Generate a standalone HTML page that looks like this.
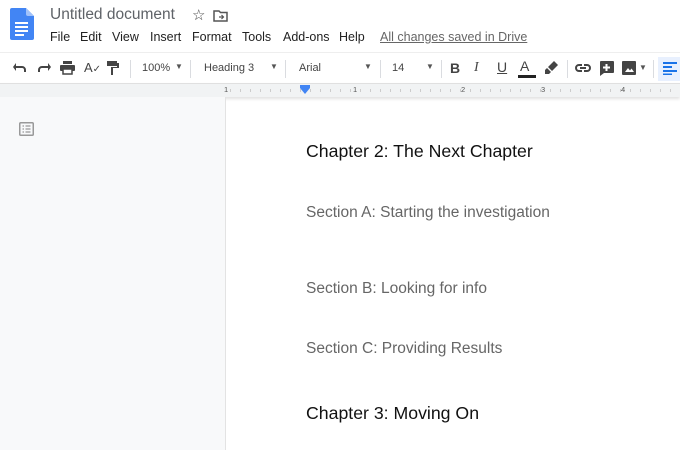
<!DOCTYPE html><html><head><style>
*{margin:0;padding:0;box-sizing:border-box}
body{width:680px;height:450px;overflow:hidden;background:#fff;font-family:"Liberation Sans",Arial,sans-serif;position:relative}
.a{position:absolute;white-space:nowrap}
.tb{color:#444;font-size:11px}
.ic{position:absolute;fill:#444}
.sep{position:absolute;top:60px;width:1px;height:18px;background:#dadce0}
</style></head><body>
<svg class="a" style="left:10px;top:8px" width="24" height="32" viewBox="0 0 24 32"><path d="M2 0h14l8 8v22a2 2 0 0 1-2 2H2a2 2 0 0 1-2-2V2a2 2 0 0 1 2-2z" fill="#4285f4"/><path d="M16 0l8 8h-6a2 2 0 0 1-2-2z" fill="#a1c2fa"/><rect x="5" y="14" width="13" height="2" fill="#fff"/><rect x="5" y="18" width="13" height="2" fill="#fff"/><rect x="5" y="22" width="13" height="2" fill="#fff"/><rect x="5" y="26" width="9" height="2" fill="#fff"/></svg>
<div class="a" style="left:50px;top:6px;font-size:15.5px;color:#5f6368">Untitled document</div>
<div class="a" style="left:192px;top:6px;font-size:15px;color:#444">☆</div>
<svg class="a" style="left:213px;top:10px" width="15" height="12" viewBox="0 0 15 12"><path d="M1 1h5l1.5 1.5H14V11H1z" fill="none" stroke="#555" stroke-width="1.5"/><path d="M6 7h4M8.5 5l2 2-2 2" fill="none" stroke="#555" stroke-width="1.2"/></svg>
<div class="a" style="left:50px;top:30px;font-size:12.5px;color:#222">File</div>
<div class="a" style="left:80px;top:30px;font-size:12.5px;color:#222">Edit</div>
<div class="a" style="left:112px;top:30px;font-size:12.5px;color:#222">View</div>
<div class="a" style="left:150px;top:30px;font-size:12.5px;color:#222">Insert</div>
<div class="a" style="left:192px;top:30px;font-size:12.5px;color:#222">Format</div>
<div class="a" style="left:242px;top:30px;font-size:12.5px;color:#222">Tools</div>
<div class="a" style="left:283px;top:30px;font-size:12.5px;color:#222">Add-ons</div>
<div class="a" style="left:339px;top:30px;font-size:12.5px;color:#222">Help</div>
<div class="a" style="left:380px;top:30px;font-size:12.5px;color:#666;text-decoration:underline">All changes saved in Drive</div>
<div class="a" style="left:0;top:52px;width:680px;height:1px;background:#eee"></div>
<svg class="ic" style="left:13px;top:62px" width="14" height="12" viewBox="0 0 14 12"><path d="M3 4h6a4 4 0 0 1 4 4v2h-2V8a2 2 0 0 0-2-2H3v3L0 5l3-4z"/></svg>
<svg class="ic" style="left:37px;top:62px" width="14" height="12" viewBox="0 0 14 12"><path d="M11 4H5a4 4 0 0 0-4 4v2h2V8a2 2 0 0 1 2-2h6v3l3-4-3-4z"/></svg>
<svg class="ic" style="left:60px;top:61px" width="15" height="14" viewBox="0 0 15 14"><rect x="3" y="0" width="9" height="3"/><rect x="0" y="4" width="15" height="6" rx="1"/><rect x="3" y="8" width="9" height="5" fill="#fff" stroke="#444" stroke-width="1.5"/></svg>
<div class="a" style="left:84px;top:60px;font-size:13px;color:#444">A<span style="font-size:10px">✓</span></div>
<svg class="ic" style="left:107px;top:61px" width="12" height="14" viewBox="0 0 12 14"><rect x="0" y="0" width="10" height="5"/><path d="M10 2h2v5H6v7H4V6h6z"/></svg>
<div class="sep" style="left:130px"></div>
<div class="a tb" style="left:142px;top:62px">100%</div><div class="a" style="left:175px;top:62px;font-size:8px;color:#555">▼</div>
<div class="sep" style="left:190px"></div>
<div class="a tb" style="left:204px;top:62px">Heading 3</div><div class="a" style="left:270px;top:62px;font-size:8px;color:#555">▼</div>
<div class="sep" style="left:285px"></div>
<div class="a tb" style="left:299px;top:62px">Arial</div><div class="a" style="left:364px;top:62px;font-size:8px;color:#555">▼</div>
<div class="sep" style="left:380px"></div>
<div class="a tb" style="left:392px;top:62px">14</div><div class="a" style="left:426px;top:62px;font-size:8px;color:#555">▼</div>
<div class="sep" style="left:441px"></div>
<div class="a" style="left:450px;top:60px;font-size:14px;font-weight:bold;color:#444">B</div>
<div class="a" style="left:474px;top:60px;font-size:14px;font-style:italic;color:#444;font-family:'Liberation Serif',serif">I</div>
<div class="a" style="left:497px;top:59px;font-size:14px;color:#444;text-decoration:underline">U</div>
<div class="a" style="left:520px;top:58px;font-size:14px;color:#444">A</div>
<div class="a" style="left:518px;top:75px;width:18px;height:3px;background:#222"></div>
<svg class="ic" style="left:545px;top:61px" width="13" height="13" viewBox="0 0 13 13"><path d="M9 0l4 4-6 6-4-4zM2 7l4 4-2 2H0v-4z"/></svg>
<div class="sep" style="left:567px"></div>
<svg class="ic" style="left:575px;top:63px" width="16" height="10" viewBox="0 0 16 10"><path d="M4 1h3v2H4a2 2 0 0 0 0 4h3v2H4a4 4 0 0 1 0-8zM9 1h3a4 4 0 0 1 0 8H9V7h3a2 2 0 0 0 0-4H9zM5 4h6v2H5z"/></svg>
<svg class="ic" style="left:599px;top:61px" width="15" height="15" viewBox="0 0 15 15"><path d="M1 0h13a1 1 0 0 1 1 1v10a1 1 0 0 1-1 1H5l-4 3V1a1 1 0 0 1 1-1z"/><path d="M6.5 3h2v2.5H11v2H8.5V10h-2V7.5H4v-2h2.5z" fill="#fff"/></svg>
<svg class="ic" style="left:622px;top:61px" width="14" height="14" viewBox="0 0 14 14"><rect width="14" height="14" rx="1"/><path d="M3 11l3-4 2 2.5 1.5-2L12 11z" fill="#fff"/></svg>
<div class="a" style="left:639px;top:63px;font-size:8px;color:#555">▼</div>
<div class="sep" style="left:653px"></div>
<div class="a" style="left:658px;top:57px;width:22px;height:24px;background:#e8f0fe"></div>
<svg class="a" style="left:663px;top:62px" width="14" height="13" viewBox="0 0 14 13"><path d="M0 0h14v2H0zM0 4h9v2H0zM0 8h14v2H0zM0 11.5h9v1.5H0z" fill="#1a73e8"/></svg>
<div class="a" style="left:306px;top:90px;font-size:12px;color:#333;height:7px;overflow:hidden;line-height:12px"><div style="margin-top:-5px">Text inside chapter 1</div></div>
<div class="a" style="left:0;top:83px;width:680px;height:14px;background:#f1f3f4;border-top:1px solid #e0e0e0;box-shadow:0 2px 3px rgba(0,0,0,.12)"></div>
<div class="a" style="left:230px;top:89px;width:450px;height:3px;background:repeating-linear-gradient(90deg,#ccc 0 1px,transparent 1px 10px)"></div>
<div class="a" style="left:230px;top:84px;width:450px;height:12px;font-size:7.5px;color:#555">
<span class="a" style="left:-6px;top:1px;background:#f1f3f4">1</span><span class="a" style="left:123px;top:1px;background:#f1f3f4">1</span><span class="a" style="left:231px;top:1px;background:#f1f3f4">2</span><span class="a" style="left:311px;top:1px;background:#f1f3f4">3</span><span class="a" style="left:391px;top:1px;background:#f1f3f4">4</span></div>
<svg class="a" style="left:300px;top:85px" width="10" height="9" viewBox="0 0 10 9"><path d="M0 0h10v3L5 9 0 3z" fill="#4285f4"/></svg>
<div class="a" style="left:0;top:97px;width:226px;height:353px;background:#f8f9fa;border-right:1px solid #e3e3e3"></div>
<svg class="a" style="left:19px;top:122px" width="15" height="14" viewBox="0 0 15 14"><rect x=".75" y=".75" width="13.5" height="12.5" rx="1" fill="none" stroke="#999" stroke-width="1.5"/><path d="M3.5 4h1.5M6.5 4h5M3.5 7h1.5M6.5 7h5M3.5 10h1.5M6.5 10h5" stroke="#999" stroke-width="1.2"/></svg>
<div class="a" style="left:306px;top:141px;font-size:17.7px;color:#111">Chapter 2: The Next Chapter</div>
<div class="a" style="left:306px;top:204px;font-size:15.5px;color:#666">Section A: Starting the investigation</div>
<div class="a" style="left:306px;top:280px;font-size:15.5px;color:#666">Section B: Looking for info</div>
<div class="a" style="left:306px;top:340px;font-size:15.5px;color:#666">Section C: Providing Results</div>
<div class="a" style="left:306px;top:403px;font-size:17.7px;color:#111">Chapter 3: Moving On</div>
</body></html>
